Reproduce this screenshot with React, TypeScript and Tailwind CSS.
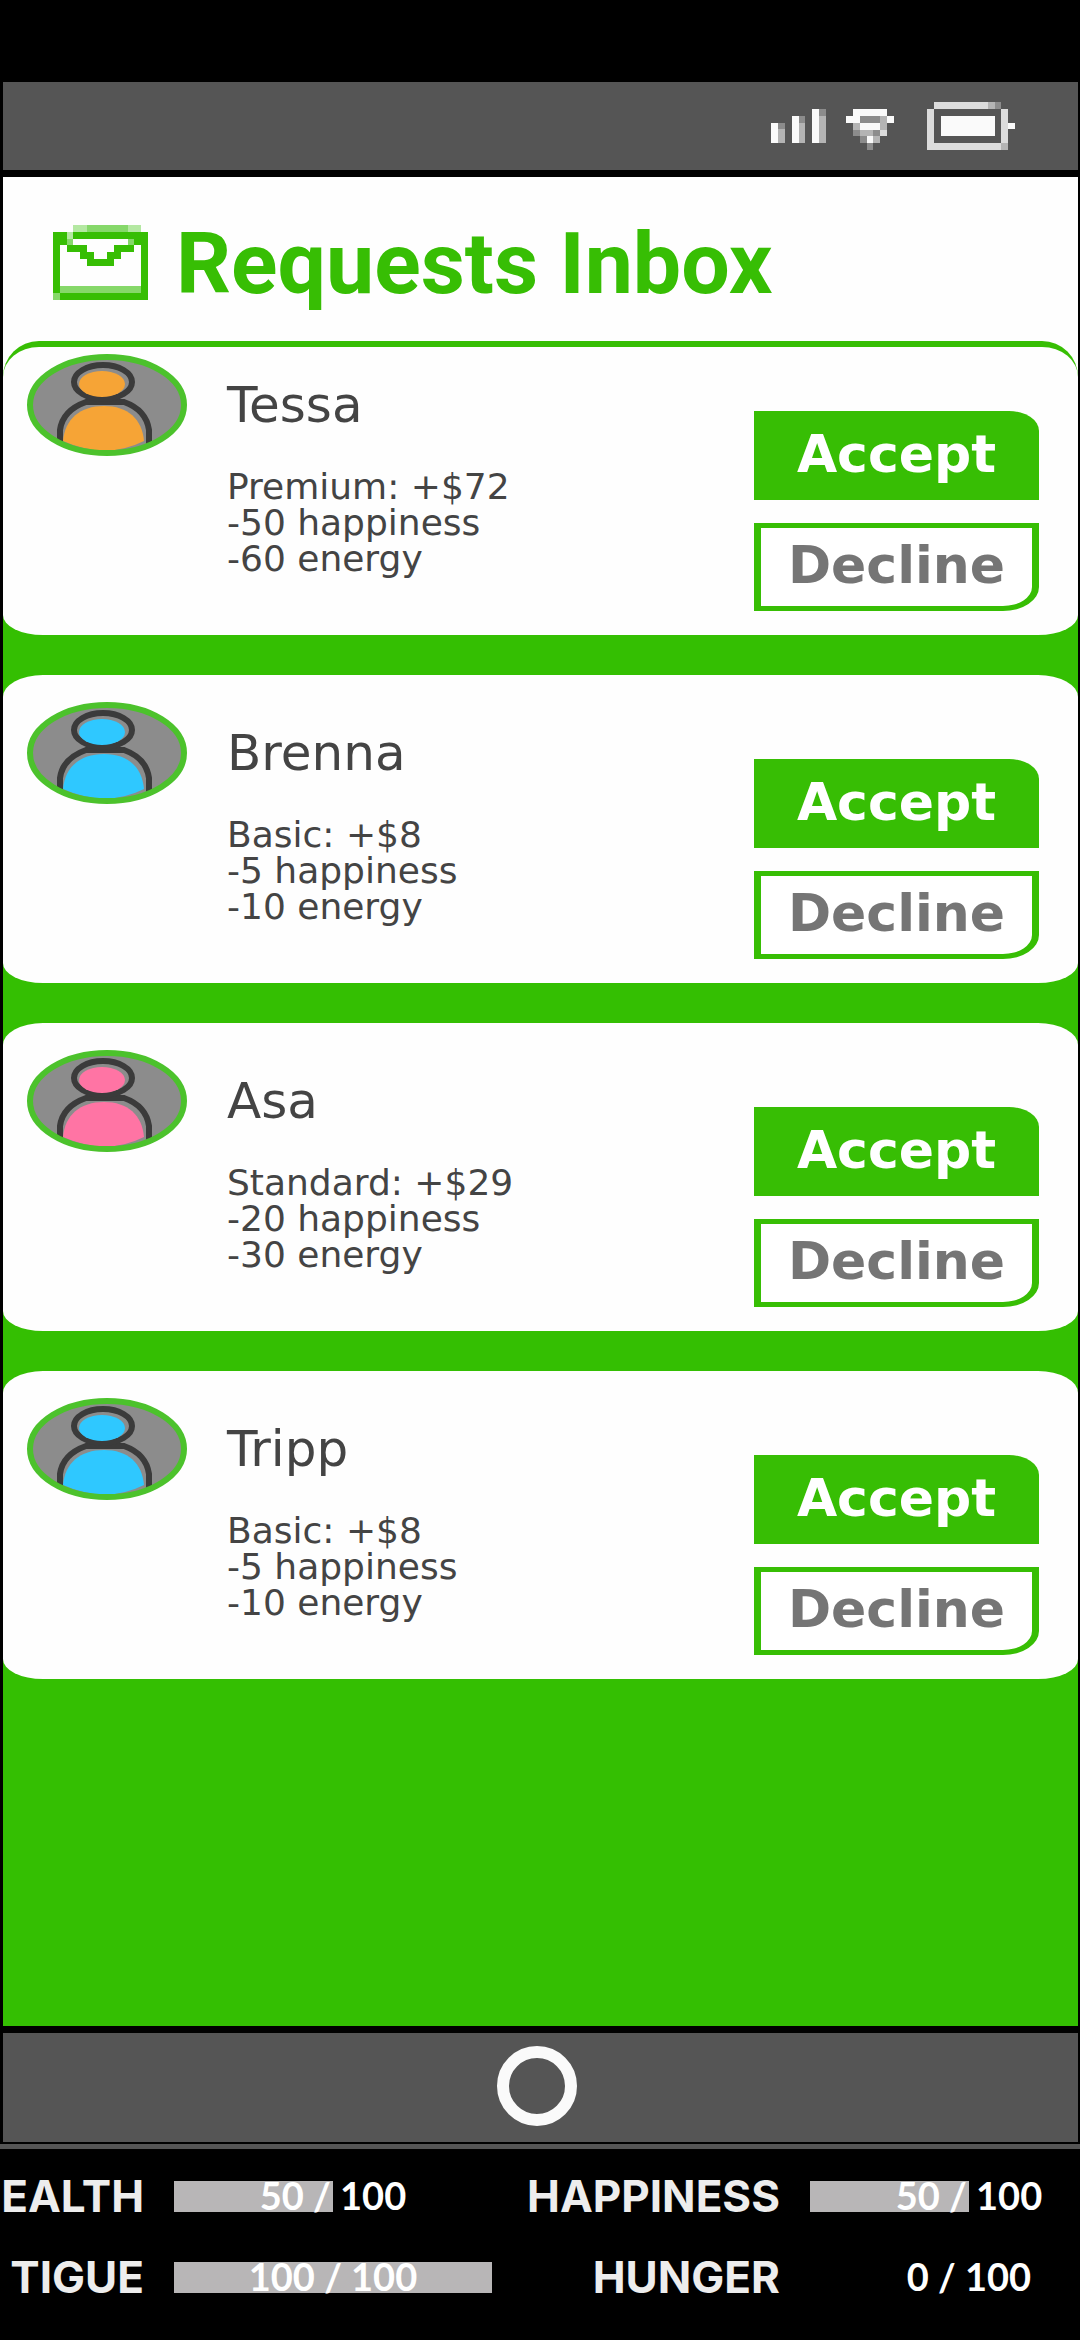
type Request = {
  name: string;
  color: string;
  tier: string;
  pay: number;
  happiness: number;
  energy: number;
};

type Stat = { id: string; label: string; value: number; max: number };

const REQUESTS: Request[] = [
  { name: "Tessa", color: "#f6a436", tier: "Premium", pay: 72, happiness: 50, energy: 60 },
  { name: "Brenna", color: "#2fc8ff", tier: "Basic", pay: 8, happiness: 5, energy: 10 },
  { name: "Asa", color: "#ff74a4", tier: "Standard", pay: 29, happiness: 20, energy: 30 },
  { name: "Tripp", color: "#2fc8ff", tier: "Basic", pay: 8, happiness: 5, energy: 10 },
];

const STATS: Stat[] = [
  { id: "Health", label: "EALTH", value: 50, max: 100 },
  { id: "Happiness", label: "HAPPINESS", value: 50, max: 100 },
  { id: "Fatigue", label: "TIGUE", value: 100, max: 100 },
  { id: "Hunger", label: "HUNGER", value: 0, max: 100 },
];

/* Pixel drawings: each character is one square of the palette. */
const PALETTE: Record<string, string> = {
  W: "#fafafa",
  L: "#dcdcdc",
  M: "#b4b4b4",
  D: "#8c8c8c",
  G: "#37be04",
  g: "#86d86a",
  p: "#b4e8a2",
};

function Pixels({ rows, className, label }: { rows: string[]; className: string; label: string }) {
  return (
    <svg
      role="img"
      aria-label={label}
      className={className}
      viewBox={`0 0 ${rows[0].length} ${rows.length}`}
      preserveAspectRatio="none"
      shapeRendering="crispEdges"
    >
      {rows.flatMap((row, y) =>
        row.split("").map((c, x) =>
          PALETTE[c] ? <rect key={`${x}-${y}`} x={x} y={y} width={1} height={1} fill={PALETTE[c]} /> : null,
        ),
      )}
    </svg>
  );
}

const SIGNAL = [
  "......WD",
  "...WD.WM",
  "WD.WM.WM",
  "WM.WM.WM",
  "WM.WM.WM",
];

const WIFI = [
  ".WWWWW.",
  "WWDDDMW",
  ".MWWWM.",
  ".DMMDL.",
  "..DWM..",
  "...D...",
];

const BATTERY = [
  ".LLLLLLLLMD..",
  "L..........L.",
  "L.WWWWWWWW.L.",
  "L.WWWWWWWW.LW",
  "L.WWWWWWWW.L.",
  "L..........L.",
  "LLLLLLLLLLLM.",
];

const ENVELOPE = [
  "...ppggggggpp.",
  "GGpGGGGGGGGGGG",
  "GGg........gGG",
  "G.GGG....GGG.G",
  "G...GG..GG...G",
  "G....GGGG....G",
  "G............G",
  "G............G",
  "G............G",
  "GggggggggggggG",
  "gGGGGGGGGGGGGG",
];

function Avatar({ color }: { color: string }) {
  return (
    <svg className="h-[103px] w-[162px] shrink-0" viewBox="0 0 162 103" aria-hidden="true">
      <ellipse cx="81" cy="51" rx="77" ry="48" fill="#8c8c8c" />
      <path d="M34 91V76C36 61 46 53 60 48H98C112 53 121 62 123 76V91" fill="none" stroke="#3b3b3b" strokeWidth="6" />
      <ellipse cx="77" cy="28" rx="29" ry="17" fill="#8c8c8c" stroke="#3b3b3b" strokeWidth="6" />
      <ellipse cx="76" cy="30" rx="23" ry="13" fill={color} />
      <path d="M37 87C39 65 54 52 78 52C102 52 116 65 118 87Q80 106 37 87Z" fill={color} />
      <ellipse cx="81" cy="51" rx="77" ry="48" fill="none" stroke="#4cc22c" strokeWidth="6" />
    </svg>
  );
}

function RequestCard({ request, first }: { request: Request; first: boolean }) {
  const shape = first
    ? "rounded-t-[36px] border-t-[6px] border-[#37be04] pt-[7px]"
    : "rounded-t-[40px_22px] pt-[27px]";
  return (
    <li className={`flex items-start rounded-b-[40px_20px] bg-[#fefefe] pr-[39px] pb-6 pl-[23px] ${shape}`}>
      <Avatar color={request.color} />
      <div className="mt-[27px] ml-[39px] min-w-0 flex-1 font-['DejaVu_Sans',sans-serif] text-[#444444]">
        <h2 className="text-[50px] leading-[48px]">{request.name}</h2>
        <div className="mt-10 text-[36px] leading-[36px]">
          <p>{`${request.tier}: +$${request.pay}`}</p>
          <p>{`-${request.happiness} happiness`}</p>
          <p>{`-${request.energy} energy`}</p>
        </div>
      </div>
      <div className="mt-[57px] flex w-[285px] shrink-0 flex-col gap-[23px] font-['DejaVu_Sans',sans-serif] text-[52px] leading-[52px] font-bold">
        <button type="button" className="h-[89px] rounded-tr-[30px_20px] bg-[#37be04] pb-1 text-white">
          Accept
        </button>
        <button
          type="button"
          className="h-[88px] rounded-br-[36px_24px] border-x-[7px] border-y-[5px] border-[#37be04] bg-white pb-1 text-[#757575]"
        >
          Decline
        </button>
      </div>
    </li>
  );
}

function StatBar({ stat }: { stat: Stat }) {
  return (
    <>
      <span className="text-right font-['Inter',sans-serif] text-[44px] leading-[31px] font-bold text-[#ededed]">
        {stat.label}
      </span>
      <div
        role="progressbar"
        aria-label={stat.id}
        aria-valuenow={stat.value}
        aria-valuemax={stat.max}
        className="relative h-[31px]"
      >
        <div className="h-full bg-[#b8b6b7]" style={{ width: `${(stat.value / stat.max) * 100}%` }} />
        <span className="absolute inset-0 text-center font-['Lato',sans-serif] text-[38px] leading-[29px] font-bold text-white">
          {`${stat.value} / ${stat.max}`}
        </span>
      </div>
    </>
  );
}

export default function App() {
  return (
    <div className="flex min-h-screen flex-col overflow-hidden bg-black pt-[82px]">
      <div className="flex flex-1 flex-col gap-[7px] pr-[2px] pl-[3px]">
        <header className="flex h-[88px] items-start justify-end bg-[#555555] pr-[63px]">
          <Pixels label="Signal" rows={SIGNAL} className="mt-[27px] h-[34px] w-[55px]" />
          <Pixels label="Wi-Fi" rows={WIFI} className="mt-[27px] ml-5 h-[41px] w-[48px]" />
          <Pixels label="Battery" rows={BATTERY} className="mt-[20px] ml-[33px] h-[48px] w-[88px]" />
        </header>

        <main className="flex-1 bg-[#34bf02]">
          <div className="flex h-[200px] items-start bg-[#fefefe] pl-[50px]">
            <Pixels label="Inbox" rows={ENVELOPE} className="mt-[48px] h-[75px] w-[95px]" />
            <h1 className="mt-[42px] ml-[28px] font-['Roboto',sans-serif] text-[86px] leading-[90px] font-bold text-[#37be04]">
              Requests Inbox
            </h1>
          </div>
          <ul className="-mt-9 flex flex-col gap-10">
            {REQUESTS.map((request, i) => (
              <RequestCard key={request.name} request={request} first={i === 0} />
            ))}
          </ul>
        </main>

        <nav className="flex h-[109px] items-center justify-center bg-[#555555] pr-2 pb-1">
          <button type="button" aria-label="Home" className="size-[80px] rounded-full border-[12px] border-[#fafafa]" />
        </nav>
      </div>

      <footer className="mt-[2px] flex justify-center border-t-[5px] border-[#555555] pt-8 pb-[47px]">
        <div className="grid shrink-0 grid-cols-[192px_318px_258px_318px] gap-x-[30px] gap-y-[50px] whitespace-nowrap">
          {STATS.map((stat) => (
            <StatBar key={stat.id} stat={stat} />
          ))}
        </div>
      </footer>
    </div>
  );
}
